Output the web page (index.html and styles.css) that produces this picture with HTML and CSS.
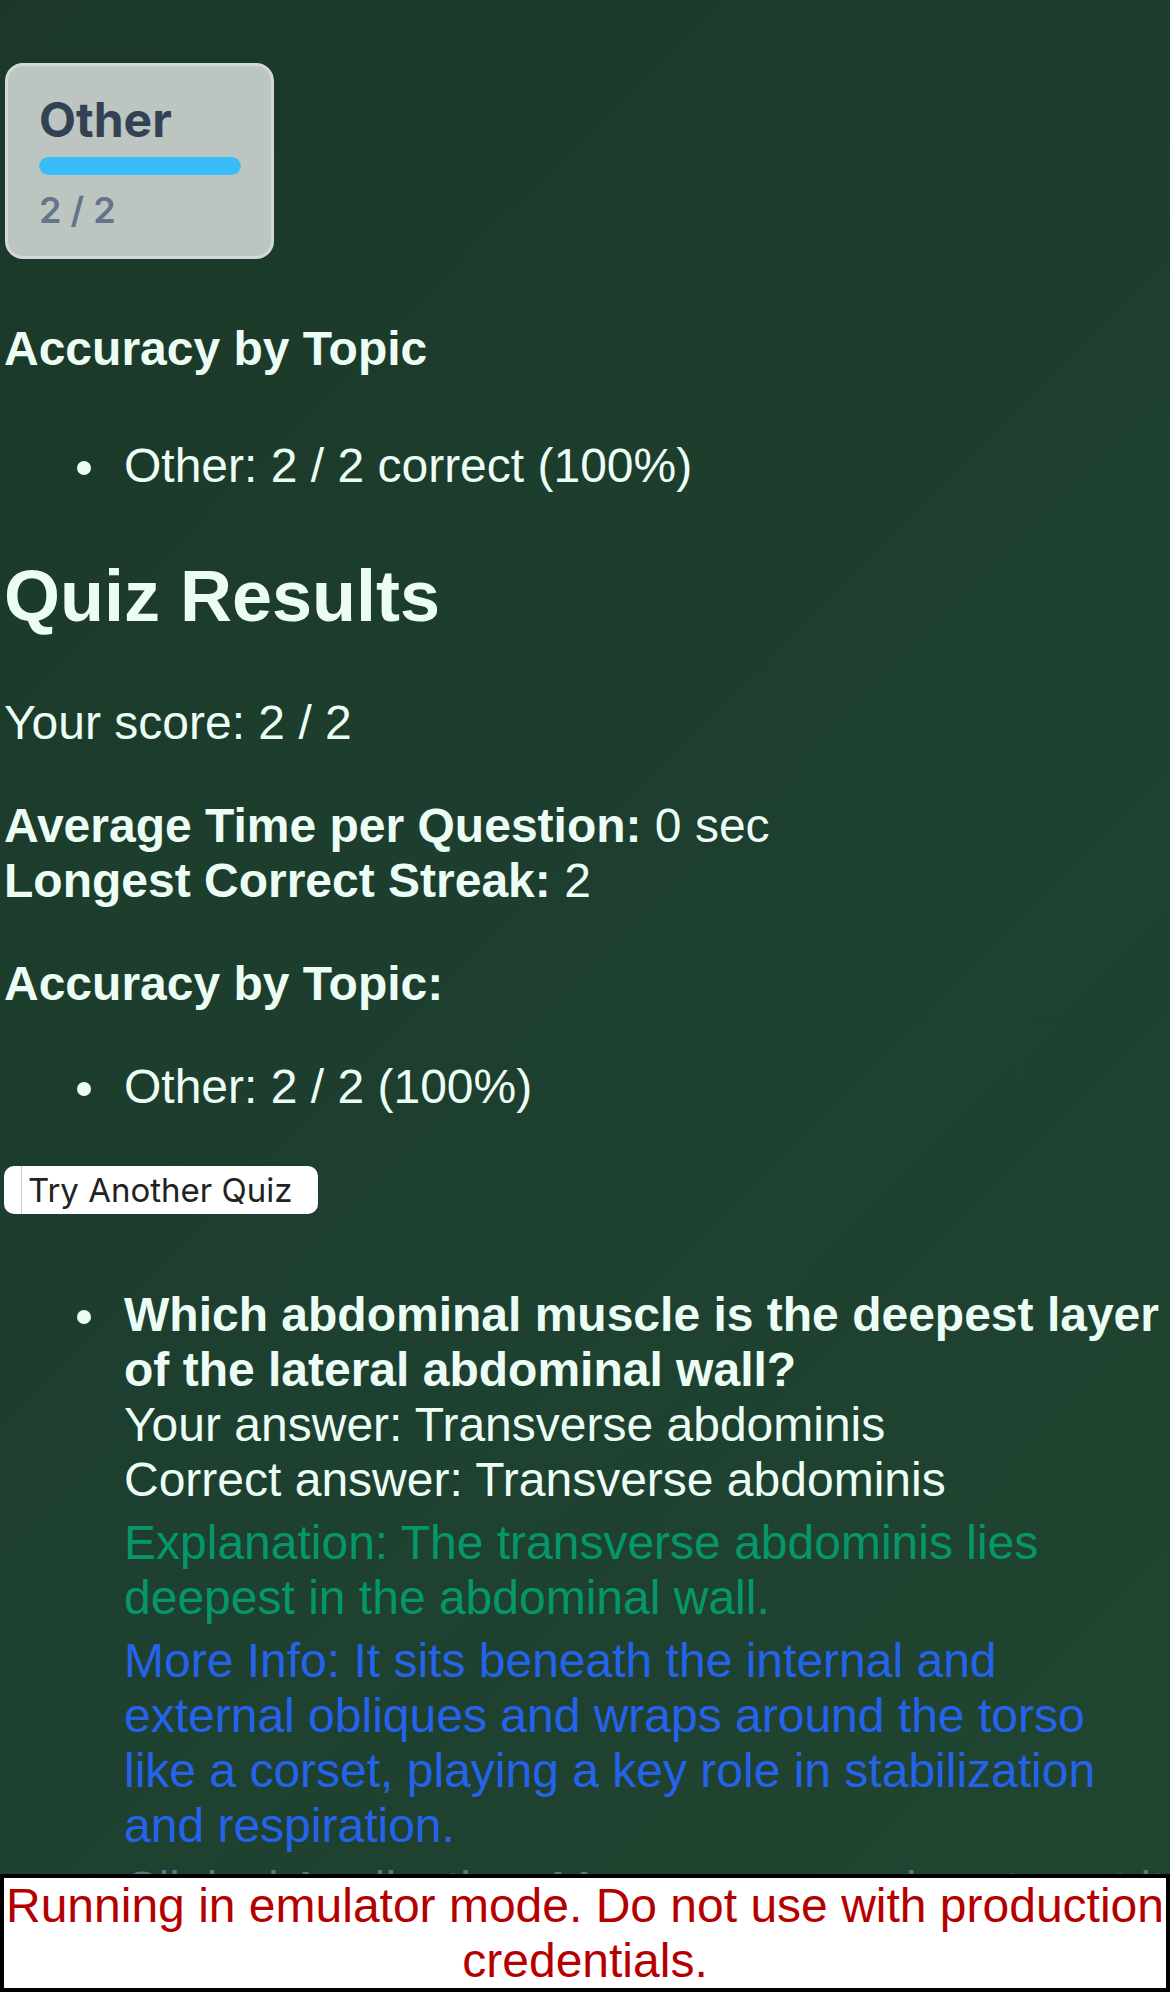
FILE: index.html
```html
<!DOCTYPE html>
<html lang="en">
<head>
<meta charset="utf-8">
<title>Quiz Results</title>
<link rel="stylesheet" href="styles.css">
</head>
<body>
<main class="page">
  <section class="topic-grid">
    <div class="topic-card">
      <div class="topic-name">Other</div>
      <div class="topic-bar"><div class="topic-fill" style="width:100%"></div></div>
      <div class="topic-count">2 / 2</div>
    </div>
  </section>

  <h4 class="section-title">Accuracy by Topic</h4>
  <ul class="topic-list">
    <li>Other: 2 / 2 correct (100%)</li>
  </ul>

  <h2 class="results-title">Quiz Results</h2>
  <p class="score">Your score: 2 / 2</p>
  <p class="stats"><strong>Average Time per Question:</strong> 0 sec<br><strong>Longest Correct Streak:</strong> 2</p>
  <p class="stats-heading"><strong>Accuracy by Topic:</strong></p>
  <ul class="topic-list results-list">
    <li>Other: 2 / 2 (100%)</li>
  </ul>

  <div class="actions">
    <button class="retry-button" type="button">Try Another Quiz</button>
  </div>

  <ul class="review-list">
    <li class="review-item">
      <strong>Which abdominal muscle is the deepest layer of the lateral abdominal wall?</strong><br>
      Your answer: Transverse abdominis<br>
      Correct answer: Transverse abdominis
      <p class="explanation">Explanation: The transverse abdominis lies deepest in the abdominal wall.</p>
      <p class="more-info">More Info: It sits beneath the internal and external obliques and wraps around the torso like a corset, playing a key role in stabilization and respiration.</p>
      <p class="clinical">Clinical Application: Many core exercises target it to support the lower back.</p>
    </li>
  </ul>
</main>

<div class="emulator-warning">Running in emulator mode. Do not use with production credentials.</div>
</body>
</html>
```

FILE: styles.css
```css
html {
  min-height: 100%;
  background: linear-gradient(135deg, #1b3828 0%, #1e4030 55%, #20462f 100%);
}

body {
  margin: 0;
  min-height: 100vh;
  font-family: "Liberation Sans", Arial, Helvetica, sans-serif;
  font-size: 48px;
  line-height: normal;
  color: #ecfdf5;
}

.page {
  padding: 1px 4px 0 4px;
}

/* topic card */
.topic-grid {
  display: flex;
  margin-top: 62px;
}

.topic-card {
  box-sizing: border-box;
  width: 269px;
  margin-left: 1px;
  padding: 25px 30px 24px 31px;
  background: #bcc5bf;
  border: 3px solid #d3d6db;
  border-radius: 18px;
  font-family: Inter, "Noto Sans", sans-serif;
}

.topic-name {
  font-size: 48px;
  line-height: 58px;
  font-weight: 700;
  color: #334155;
}

.topic-bar {
  margin-top: 8px;
  height: 18px;
  border-radius: 9px;
  overflow: hidden;
}

.topic-fill {
  height: 100%;
  background: #38bdf8;
  border-radius: 9px;
}

.topic-count {
  margin-top: 13px;
  font-size: 36px;
  line-height: 44px;
  font-weight: 600;
  color: #64748b;
}

/* headings and text */
.section-title {
  font-size: 48px;
  font-weight: bold;
  margin: 62px 0 0;
}

.topic-list {
  margin: 62px 0 48px;
  padding-left: 108px;
}

.topic-list li,
.review-item {
  padding-left: 12px;
}

.results-title {
  font-size: 72px;
  font-weight: bold;
  margin: 62px 0 58px;
}

.score,
.stats,
.stats-heading {
  margin: 48px 0;
}

.results-list {
  margin: 48px 0;
}

.actions {
  display: flex;
  margin-top: 52px;
}

.retry-button {
  position: relative;
  font-family: Inter, "Noto Sans", sans-serif;
  font-size: 33px;
  line-height: 40px;
  color: #222222;
  background: #ffffff;
  border: none;
  border-radius: 10px;
  padding: 4px 26px 4px 24px;
  margin: 0;
}

.retry-button::before {
  content: "";
  position: absolute;
  left: 17px;
  top: 0;
  bottom: 0;
  width: 1px;
  background: #c6cfc9;
}

.review-list {
  margin: 73px 0 48px;
  padding-left: 108px;
}

.review-item strong {
  font-weight: bold;
}

.explanation,
.more-info,
.clinical {
  margin: 8px 0;
}

.explanation {
  color: #059669;
}

.more-info {
  color: #2563eb;
}

.clinical {
  color: #64748b;
}

/* emulator banner */
.emulator-warning {
  position: fixed;
  left: 0;
  right: 0;
  bottom: 0;
  box-sizing: border-box;
  background: #ffffff;
  border: 0.1em solid #000000;
  color: #b50000;
  text-align: center;
  font-family: "Liberation Sans", Arial, sans-serif;
  font-size: 48px;
  z-index: 10;
}
```
